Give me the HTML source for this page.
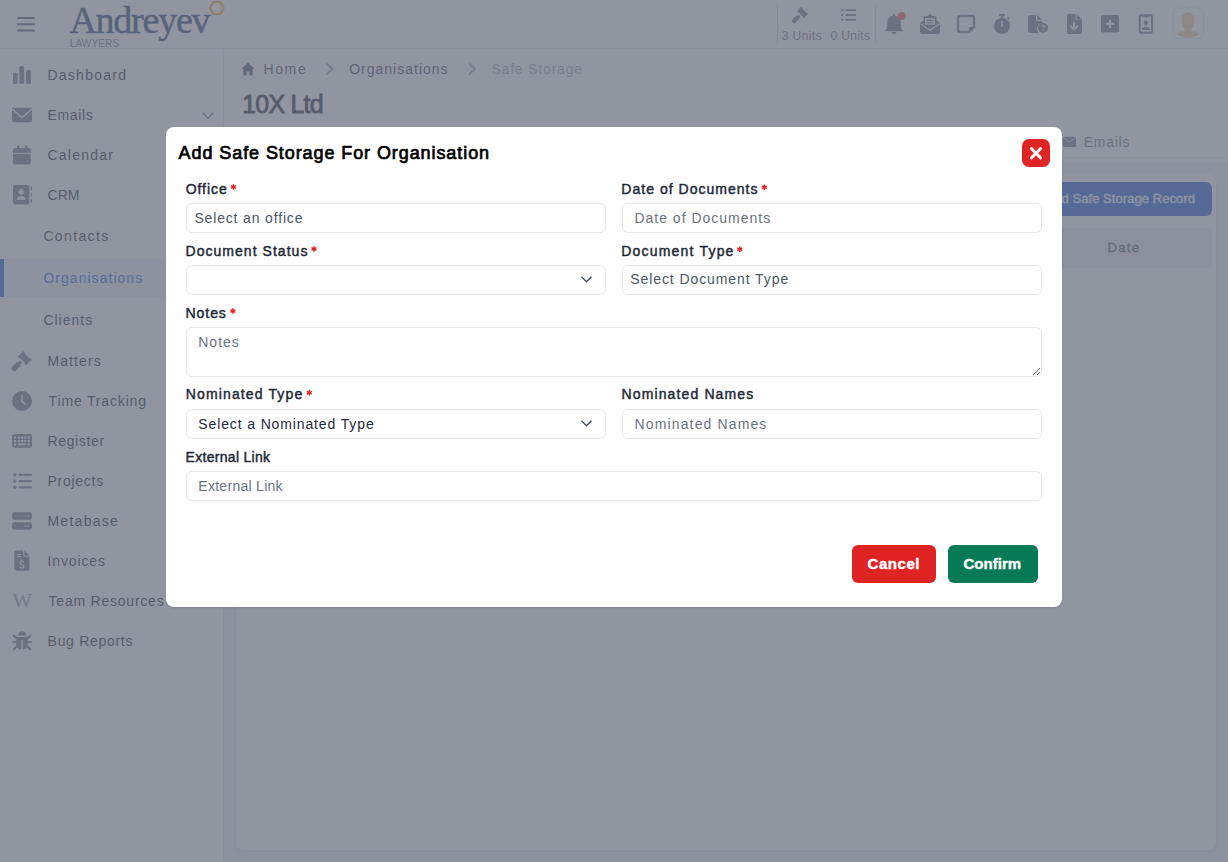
<!DOCTYPE html>
<html><head><meta charset="utf-8">
<style>
html,body{margin:0;padding:0;width:1228px;height:862px;overflow:hidden;background:#fff;font-family:"Liberation Sans",sans-serif}
.abs{position:absolute}
.tx{position:absolute;white-space:pre}
svg{position:absolute;overflow:visible}
#overlay{position:absolute;left:0;top:0;width:1228px;height:862px;background:rgba(107,114,128,0.75)}
.inp{position:absolute;box-sizing:border-box;border:1px solid #e5e7eb;border-radius:6px;background:#fff}
</style></head>
<body>
<!-- ===== BACKGROUND PAGE ===== -->
<div class="abs" style="left:0;top:0;width:1228px;height:48px;background:#fff;border-bottom:1px solid #e5e7eb"></div>
<div class="abs" style="left:0;top:49px;width:223px;height:813px;background:#fff;border-right:1px solid #e5e7eb"></div>
<div class="abs" style="left:224px;top:49px;width:1004px;height:113px;background:#fff"></div>
<div class="abs" style="left:224px;top:162px;width:1004px;height:700px;background:#f3f4f6"></div>
<!-- tab border -->
<div class="abs" style="left:236px;top:157px;width:988px;height:1px;background:#e5e7eb"></div>
<!-- card -->
<div class="abs" style="left:236px;top:174px;width:980px;height:676px;background:#fff;border-radius:7px;box-shadow:0 4px 6px -1px rgba(0,0,0,0.1),0 2px 4px -2px rgba(0,0,0,0.1)"></div>
<div class="abs" style="left:1000px;top:182px;width:212px;height:34px;background:#1a56db;border-radius:6px"></div>
<div class="abs" style="left:240px;top:228px;width:972px;height:40px;background:#e9ebee"></div>
<!-- active sidebar item -->
<div class="abs" style="left:0;top:259px;width:223px;height:38px;background:#eef2ff"></div>
<div class="abs" style="left:0;top:259px;width:4px;height:38px;background:#1a56db"></div>

<!-- hamburger -->
<svg style="left:0;top:0" width="60" height="48"><g fill="#4b5563"><rect x="17" y="17" width="18" height="2" rx="1"/><rect x="17" y="23.3" width="18" height="2" rx="1"/><rect x="17" y="29.5" width="18" height="2" rx="1"/></g></svg>
<!-- hexagon -->
<svg style="left:0;top:0" width="240" height="48"><polygon points="209.8,8 213.3,2 220.3,2 223.8,8 220.3,14 213.3,14" fill="none" stroke="#f5a020" stroke-width="2"/></svg>
<!-- header dividers -->
<div class="abs" style="left:777px;top:4px;width:1px;height:40px;background:#d1d5db"></div>
<div class="abs" style="left:875px;top:4px;width:1px;height:40px;background:#d1d5db"></div>

<!-- header icons -->
<svg style="left:0;top:0" width="1228" height="48">
 <g fill="#6b7280">
  <!-- gavel 792-808 x 7-23 -->
  <g transform="translate(792,6.5) scale(1.0312)"><g transform="rotate(45 10.2 5.9)" fill="#6b7280">
 <rect x="5.5" y="2.65" width="1.6" height="6.5" rx="0.6"/>
 <rect x="13.3" y="2.65" width="1.6" height="6.5" rx="0.6"/>
 <rect x="6.5" y="3.4" width="7.4" height="5" />
 <rect x="9.1" y="9.7" width="2.2" height="2.2" rx="0.5"/>
 <rect x="8.1" y="11.4" width="4.2" height="7.8" rx="1.3"/>
</g></g>
  <!-- list 841-856 x 9-21 -->
  <circle cx="842.2" cy="10.2" r="1.2"/><circle cx="842.2" cy="15" r="1.2"/><circle cx="842.2" cy="19.8" r="1.2"/>
  <rect x="845.5" y="9.3" width="10.5" height="1.8"/><rect x="845.5" y="14.1" width="10.5" height="1.8"/><rect x="845.5" y="18.9" width="10.5" height="1.8"/>
  <!-- bell 885-903 x 14-34 -->
  <path d="M894,14 c0.8,0 1.2,0.5 1.2,1.2 v0.6 c3.3,0.6 5.5,3.4 5.5,6.7 v3.5 c0,1.8 0.8,3.3 2.3,4.7 v0.6 h-18 v-0.6 c1.5,-1.4 2.3,-2.9 2.3,-4.7 v-3.5 c0,-3.3 2.2,-6.1 5.5,-6.7 v-0.6 c0,-0.7 0.4,-1.2 1.2,-1.2z"/>
  <path d="M891.5,32 h5 c0,1.2 -1.1,2 -2.5,2 s-2.5,-0.8 -2.5,-2z"/>
  <circle cx="901.9" cy="15.9" r="4" fill="#f05252"/>
  <!-- envelope open text 920-940 x 14-34 -->
  <path d="M930,14 l3,2.2 h3.5 v4.2 l3.5,2.6 v9 c0,1.1 -0.9,2 -2,2 h-16 c-1.1,0 -2,-0.9 -2,-2 v-9 l3.5,-2.6 v-4.2 h3.5z"/>
  <rect x="925" y="18.2" width="10" height="6.5" fill="#fff"/>
  <rect x="926.5" y="19.7" width="7" height="1.3"/><rect x="926.5" y="22" width="7" height="1.3"/>
  <path d="M920.5,23.8 l9.5,6.5 l9.5,-6.5" fill="none" stroke="#fff" stroke-width="1.2"/>
  <!-- sticky note outline 957-975 x 15-33 -->
  <path d="M959.5,16 h13 c0.8,0 1.5,0.7 1.5,1.5 v9.5 l-5,5 h-9.5 c-0.8,0 -1.5,-0.7 -1.5,-1.5 v-13 c0,-0.8 0.7,-1.5 1.5,-1.5z" fill="none" stroke="#6b7280" stroke-width="2.4"/>
  <path d="M974,27 h-4 c-0.6,0 -1,0.4 -1,1 v4z"/>
  <!-- stopwatch 994-1010 x 14-34 -->
  <rect x="999" y="14" width="6" height="2" rx="0.8"/>
  <rect x="1001" y="15.5" width="2" height="3"/>
  <circle cx="1002" cy="26" r="8"/>
  <rect x="1007.2" y="17.3" width="2.2" height="2.2" transform="rotate(45 1008.3 18.4)"/>
  <rect x="1001.1" y="21" width="1.8" height="6" rx="0.9" fill="#fff"/>
  <!-- file question 1028-1048 x 15-33 -->
  <path d="M1030,15 h6 v4.5 c0,0.8 0.7,1.5 1.5,1.5 h4.5 v2 a5.8,5.8 0 0 0 -3.2,10 h-8.8 c-1.1,0 -2,-0.9 -2,-2 v-14 c0,-1.1 0.9,-2 2,-2z"/>
  <path d="M1037.3,15 l4.7,4.7 h-4.7z"/>
  <circle cx="1043" cy="27.7" r="5"/>
  <path d="M1041.6,26.5 c0,-0.9 0.6,-1.5 1.4,-1.5 c0.8,0 1.4,0.5 1.4,1.3 c0,1.1 -1.4,1.1 -1.4,2.2" fill="none" stroke="#fff" stroke-width="1.1"/>
  <circle cx="1043" cy="30.2" r="0.7" fill="#fff"/>
  <!-- file arrow down 1067-1082 x 14-34 -->
  <path d="M1069,14 h6.5 v4.5 c0,0.8 0.7,1.5 1.5,1.5 h5 v12 c0,1.1 -0.9,2 -2,2 h-11 c-1.1,0 -2,-0.9 -2,-2 v-16 c0,-1.1 0.9,-2 2,-2z"/>
  <path d="M1076.5,14 l5.5,5.5 h-5.5z"/>
  <path d="M1074,22.6 v7 M1070.6,26.2 l3.4,3.6 l3.4,-3.6" fill="none" stroke="#fff" stroke-width="2" stroke-linecap="round" stroke-linejoin="round"/>
  <!-- square plus 1101-1119 x 15-32.5 -->
  <rect x="1101" y="15" width="18" height="17.5" rx="2.2"/>
  <path d="M1110,19.9 v8.1 M1105.9,23.95 h8.2" stroke="#fff" stroke-width="2.2"/>
  <!-- id badge outline 1139-1153 x 14-34 -->
  <rect x="1139.7" y="15.2" width="12.3" height="17.5" rx="1.8" fill="none" stroke="#6b7280" stroke-width="2"/>
  <rect x="1143.4" y="16" width="5.2" height="1.4"/>
  <circle cx="1145.9" cy="22.8" r="2.2"/>
  <path d="M1142,30 c0,-2.2 1.6,-3.2 3.9,-3.2 s3.9,1 3.9,3.2z"/>
 </g>
 <!-- avatar -->
 <rect x="1173" y="8" width="30.5" height="30.5" rx="5.5" fill="#fff" stroke="#e5e7eb" stroke-width="1"/>
 <g fill="#f8c8a0">
  <path d="M1188,12.7 c3.6,0 6.2,2.2 6.2,6.5 c0,4.2 -0.6,7.4 -2,9.2 c-1.1,1.3 -2.5,1.7 -4.2,1.7 s-3.1,-0.4 -4.2,-1.7 c-1.4,-1.8 -2,-5 -2,-9.2 c0,-4.3 2.6,-6.5 6.2,-6.5z"/>
  <rect x="1184.8" y="27" width="6.6" height="4.5"/>
  <path d="M1176.8,34 C1180,31.2 1184,30.6 1188,30.6 C1192,30.6 1196,31.2 1199.2,34 C1196,37 1192,37.8 1188,37.8 C1184,37.8 1180,37 1176.8,34z"/>
 </g>
</svg>

<!-- sidebar icons -->
<svg style="left:0;top:0" width="223" height="700">
 <g fill="#6b7280">
  <!-- dashboard bars -->
  <rect x="13" y="72.7" width="4.6" height="11.3" rx="1.5"/>
  <rect x="19.3" y="66" width="4.8" height="18" rx="1.5"/>
  <rect x="26" y="70" width="4.8" height="14" rx="1.5"/>
  <!-- envelope -->
  <rect x="12" y="107.8" width="20" height="14.5" rx="2"/>
  <path d="M12.3,109.3 L22,117.6 L31.7,109.3" fill="none" stroke="#fff" stroke-width="1.3"/>
  <!-- calendar -->
  <rect x="13" y="148" width="17.8" height="16.6" rx="2"/>
  <rect x="17" y="145.5" width="2.3" height="4" rx="0.8"/>
  <rect x="25" y="145.5" width="2.3" height="4" rx="0.8"/>
  <rect x="13" y="152.8" width="17.8" height="0.9" fill="#fff"/>
  <!-- CRM address book -->
  <rect x="13" y="185" width="16.3" height="19.6" rx="2.5"/>
  <circle cx="21.2" cy="192" r="2.7" fill="#fff"/>
  <path d="M16.8,199.8 c0,-2.6 2,-3.7 4.4,-3.7 s4.4,1.1 4.4,3.7z" fill="#fff"/>
  <rect x="30.6" y="187" width="1.4" height="3.5"/><rect x="30.6" y="193" width="1.4" height="3.5"/><rect x="30.6" y="199" width="1.4" height="3.5"/>
  <!-- gavel 12-32 x 351-371 -->
  <g transform="translate(11.5,350.5) scale(1.2875)"><g transform="rotate(45 10.2 5.9)" fill="#6b7280">
 <rect x="5.5" y="2.65" width="1.6" height="6.5" rx="0.6"/>
 <rect x="13.3" y="2.65" width="1.6" height="6.5" rx="0.6"/>
 <rect x="6.5" y="3.4" width="7.4" height="5" />
 <rect x="9.1" y="9.7" width="2.2" height="2.2" rx="0.5"/>
 <rect x="8.1" y="11.4" width="4.2" height="7.8" rx="1.3"/>
</g></g>
  <!-- clock -->
  <circle cx="22" cy="401" r="10"/>
  <path d="M22,395.5 v5.7 l3.3,3.3" fill="none" stroke="#fff" stroke-width="1.6" stroke-linecap="round"/>
  <!-- keyboard -->
  <rect x="12" y="434" width="20" height="13.8" rx="2.2"/>
  <g fill="#fff"><rect x="14" y="436.6" width="2.1" height="2.1"/><rect x="17.7" y="436.6" width="2.1" height="2.1"/><rect x="21" y="436.6" width="2.1" height="2.1"/><rect x="24.2" y="436.6" width="2.1" height="2.1"/><rect x="27.7" y="436.6" width="2.1" height="2.1"/><rect x="14" y="440.0" width="2.1" height="2.1"/><rect x="17.7" y="440.0" width="2.1" height="2.1"/><rect x="21" y="440.0" width="2.1" height="2.1"/><rect x="24.2" y="440.0" width="2.1" height="2.1"/><rect x="27.7" y="440.0" width="2.1" height="2.1"/><rect x="14" y="443.3" width="2.1" height="2.1"/><rect x="17.9" y="443.3" width="8.1" height="2.1"/><rect x="27.7" y="443.3" width="2.1" height="2.1"/></g>
  <!-- list -->
  <circle cx="14.8" cy="474.8" r="1.8"/><circle cx="14.8" cy="481" r="1.8"/><circle cx="14.8" cy="487.3" r="1.8"/>
  <rect x="18.7" y="473.8" width="13.3" height="2.2" rx="1"/><rect x="18.7" y="480" width="13.3" height="2.2" rx="1"/><rect x="18.7" y="486.2" width="13.3" height="2.2" rx="1"/>
  <!-- server -->
  <rect x="12" y="512.2" width="20" height="7.6" rx="2.4"/>
  <rect x="12" y="522.2" width="20" height="7.6" rx="2.4"/>
  <g fill="#fff"><rect x="24.7" y="515.3" width="1.4" height="1.5"/><rect x="27.5" y="515.3" width="1.4" height="1.5"/><rect x="24.7" y="525.3" width="1.4" height="1.5"/><rect x="27.5" y="525.3" width="1.4" height="1.5"/></g>
  <!-- invoice -->
  <path d="M16.3,550.6 h7 v4.5 c0,0.8 0.7,1.5 1.5,1.5 h4.6 v12.1 c0,1.1 -0.9,2 -2,2 h-11.1 c-1.1,0 -2,-0.9 -2,-2 v-16.1 c0,-1.1 0.9,-2 2,-2z"/>
  <path d="M24.3,550.6 l5.1,5.1 h-5.1z"/>
  <g fill="#fff"><rect x="17" y="554" width="4" height="0.9"/><rect x="17" y="556.2" width="4" height="0.9"/></g>
  <path d="M24,562.4 c-0.5,-0.7 -1.3,-1 -2.1,-1 c-1.2,0 -2,0.6 -2,1.5 c0,2 4.2,1.2 4.2,3.4 c0,1 -0.9,1.6 -2.1,1.6 c-0.9,0 -1.7,-0.4 -2.2,-1.1 M21.9,560 v1.4 M21.9,567.5 v1.3" fill="none" stroke="#fff" stroke-width="1.1"/>
  <!-- W -->
  <text x="22.2" y="607.4" font-family="Liberation Serif" font-size="19.5" fill="#8b919c" text-anchor="middle" textLength="19.6" lengthAdjust="spacingAndGlyphs">W</text>
  <!-- bug -->
  <path d="M18.1,635.6 a3.9,4.3 0 0 1 7.8,0 z"/>
  <path d="M16.2,637 h11.6 v6.5 c0,3.5 -2.6,6.2 -5.8,6.2 s-5.8,-2.7 -5.8,-6.2z"/>
  <g stroke="#6b7280" stroke-width="2.2" stroke-linecap="round">
   <line x1="13.8" y1="635.8" x2="17" y2="638.6"/><line x1="30.2" y1="635.8" x2="27" y2="638.6"/>
   <line x1="13.8" y1="649.2" x2="16.8" y2="646.5"/><line x1="30.2" y1="649.2" x2="27.2" y2="646.5"/>
  </g>
  <rect x="12.2" y="641.2" width="4.5" height="2"/><rect x="27.3" y="641.2" width="4.5" height="2"/>
  <rect x="21.25" y="640" width="1.5" height="10" fill="#fff"/>
 </g>
 <!-- emails chevron -->
 <path d="M202.5,112.8 L208,118.3 L213.5,112.8" fill="none" stroke="#6b7280" stroke-width="1.5"/>
</svg>

<!-- main icons -->
<svg style="left:0;top:0" width="1228" height="300">
 <g fill="#6b7280">
  <!-- house -->
  <path fill="#4b5563" d="M248,62.7 L254.5,68.8 h-1.8 v6.7 h-3.3 v-4 h-2.8 v4 h-3.3 v-6.7 h-1.8z"/>
  <!-- envelope tab -->
  <rect x="1063" y="136.7" width="13" height="10.3" rx="1.3"/>
 </g>
 <path d="M1063.5,137.6 L1069.5,142 L1075.5,137.6" fill="none" stroke="#fff" stroke-width="1"/>
 <g fill="none" stroke="#9ca3af" stroke-width="2">
  <path d="M326.5,63.5 L332.5,69 L326.5,74.5"/>
  <path d="M469,63.5 L475,69 L469,74.5"/>
 </g>
</svg>

<div class='tx' style='left:69.4px;top:1.2px;font-size:38px;line-height:38px;font-weight:400;color:#1e3a6e;letter-spacing:-1.243px;font-family:"Liberation Serif";-webkit-text-stroke:0.5px #1e3a6e'>Andreyev</div>
<div class='tx' style='left:69.7px;top:38.5px;font-size:10px;line-height:10px;font-weight:400;color:#5a6a8a;letter-spacing:0.150px;font-family:"Liberation Sans";'>LAWYERS</div>
<div class='tx' style='left:781.7px;top:29.6px;font-size:12px;line-height:12px;font-weight:400;color:#6b7280;letter-spacing:0.433px;font-family:"Liberation Sans";'>3 Units</div>
<div class='tx' style='left:830.6px;top:29.6px;font-size:12px;line-height:12px;font-weight:400;color:#6b7280;letter-spacing:0.350px;font-family:"Liberation Sans";'>0 Units</div>
<div class='tx' style='left:47.4px;top:68.0px;font-size:14px;line-height:14px;font-weight:400;color:#111827;letter-spacing:1.275px;font-family:"Liberation Sans";'>Dashboard</div>
<div class='tx' style='left:47.4px;top:108.0px;font-size:14px;line-height:14px;font-weight:400;color:#111827;letter-spacing:0.660px;font-family:"Liberation Sans";'>Emails</div>
<div class='tx' style='left:47.4px;top:148.0px;font-size:14px;line-height:14px;font-weight:400;color:#111827;letter-spacing:1.243px;font-family:"Liberation Sans";'>Calendar</div>
<div class='tx' style='left:47.6px;top:188.0px;font-size:14px;line-height:14px;font-weight:400;color:#111827;letter-spacing:0.000px;font-family:"Liberation Sans";'>CRM</div>
<div class='tx' style='left:43.4px;top:229.0px;font-size:14px;line-height:14px;font-weight:400;color:#111827;letter-spacing:1.357px;font-family:"Liberation Sans";'>Contacts</div>
<div class='tx' style='left:43.4px;top:271.0px;font-size:14px;line-height:14px;font-weight:400;color:#1a56db;letter-spacing:1.033px;font-family:"Liberation Sans";'>Organisations</div>
<div class='tx' style='left:43.4px;top:313.0px;font-size:14px;line-height:14px;font-weight:400;color:#111827;letter-spacing:1.000px;font-family:"Liberation Sans";'>Clients</div>
<div class='tx' style='left:47.4px;top:354.0px;font-size:14px;line-height:14px;font-weight:400;color:#111827;letter-spacing:1.117px;font-family:"Liberation Sans";'>Matters</div>
<div class='tx' style='left:48.6px;top:394.0px;font-size:14px;line-height:14px;font-weight:400;color:#111827;letter-spacing:0.833px;font-family:"Liberation Sans";'>Time Tracking</div>
<div class='tx' style='left:47.4px;top:434.0px;font-size:14px;line-height:14px;font-weight:400;color:#111827;letter-spacing:0.671px;font-family:"Liberation Sans";'>Register</div>
<div class='tx' style='left:47.4px;top:474.0px;font-size:14px;line-height:14px;font-weight:400;color:#111827;letter-spacing:0.757px;font-family:"Liberation Sans";'>Projects</div>
<div class='tx' style='left:47.4px;top:514.0px;font-size:14px;line-height:14px;font-weight:400;color:#111827;letter-spacing:1.286px;font-family:"Liberation Sans";'>Metabase</div>
<div class='tx' style='left:47.6px;top:554.0px;font-size:14px;line-height:14px;font-weight:400;color:#111827;letter-spacing:0.857px;font-family:"Liberation Sans";'>Invoices</div>
<div class='tx' style='left:48.6px;top:594.0px;font-size:14px;line-height:14px;font-weight:400;color:#111827;letter-spacing:0.769px;font-family:"Liberation Sans";'>Team Resources</div>
<div class='tx' style='left:47.6px;top:634.0px;font-size:14px;line-height:14px;font-weight:400;color:#111827;letter-spacing:0.700px;font-family:"Liberation Sans";'>Bug Reports</div>
<div class='tx' style='left:263.4px;top:62.3px;font-size:14px;line-height:14px;font-weight:400;color:#374151;letter-spacing:1.667px;font-family:"Liberation Sans";'>Home</div>
<div class='tx' style='left:349.2px;top:62.3px;font-size:14px;line-height:14px;font-weight:400;color:#374151;letter-spacing:1.000px;font-family:"Liberation Sans";'>Organisations</div>
<div class='tx' style='left:491.4px;top:62.3px;font-size:14px;line-height:14px;font-weight:400;color:#9ca3af;letter-spacing:0.818px;font-family:"Liberation Sans";'>Safe Storage</div>
<div class='tx' style='left:242.2px;top:92.4px;font-size:25px;line-height:25px;font-weight:400;color:#111827;letter-spacing:-0.783px;font-family:"Liberation Sans";-webkit-text-stroke:0.8px #111827'>10X Ltd</div>
<div class='tx' style='left:1083.7px;top:135.3px;font-size:14px;line-height:14px;font-weight:400;color:#6b7280;letter-spacing:0.740px;font-family:"Liberation Sans";'>Emails</div>
<div class='tx' style='left:1061.5px;top:191.7px;font-size:13px;line-height:13px;font-weight:400;color:#ffffff;letter-spacing:0.060px;font-family:"Liberation Sans";-webkit-text-stroke:0.3px #fff'>d Safe Storage Record</div>
<div class='tx' style='left:1107.4px;top:241.0px;font-size:13px;line-height:13px;font-weight:400;color:#4b5563;letter-spacing:1.367px;font-family:"Liberation Sans";-webkit-text-stroke:0.3px #4b5563'>Date</div>

<div id="overlay"></div>

<!-- ===== MODAL ===== -->
<div class="abs" style="left:166px;top:127px;width:896px;height:480px;background:#fff;border-radius:8px;box-shadow:0 1px 2px rgba(0,0,0,0.12)"></div>
<div class="abs" style="left:1022px;top:139px;width:28px;height:28px;background:#e02424;border-radius:7px"></div>
<svg style="left:0;top:0" width="1228" height="862">
 <path d="M1031.35,148.55 L1040.65,157.85 M1040.65,148.55 L1031.35,157.85" stroke="#fff" stroke-width="3" stroke-linecap="round"/>
</svg>

<div class="inp" style="left:186px;top:203px;width:420px;height:30px"></div>
<div class="inp" style="left:622px;top:203px;width:420px;height:30px"></div>
<div class="inp" style="left:186px;top:265px;width:420px;height:30px"></div>
<div class="inp" style="left:622px;top:265px;width:420px;height:30px"></div>
<textarea style="position:absolute;left:186px;top:327px;width:856px;height:50px;box-sizing:border-box;border:1px solid #e5e7eb;border-radius:6px;background:#fff;margin:0;padding:0;outline:none;font-family:'Liberation Sans',sans-serif"></textarea>
<div class="inp" style="left:186px;top:409px;width:420px;height:30px"></div>
<div class="inp" style="left:622px;top:409px;width:420px;height:30px"></div>
<div class="inp" style="left:186px;top:471px;width:856px;height:30px"></div>
<svg style="left:0;top:0" width="1228" height="862">
 <g fill="none" stroke="#4b5563" stroke-width="1.5">
  <path d="M581.5,276.7 L586.5,281.7 L591.5,276.7"/>
  <path d="M581.5,420.7 L586.5,425.7 L591.5,420.7"/>
 </g>
</svg>

<div class="abs" style="left:852px;top:545px;width:84px;height:38px;background:#e02424;border-radius:6px"></div>
<div class="abs" style="left:948px;top:545px;width:90px;height:38px;background:#057a55;border-radius:6px"></div>

<div class='tx' style='left:178.6px;top:143.6px;font-size:18px;line-height:18px;font-weight:400;color:#000000;letter-spacing:0.916px;font-family:"Liberation Sans";-webkit-text-stroke:0.7px #000'>Add Safe Storage For Organisation</div>
<div class='tx' style='left:185.7px;top:182.3px;font-size:14px;line-height:14px;font-weight:400;color:#1f2937;letter-spacing:0.940px;font-family:"Liberation Sans";-webkit-text-stroke:0.45px #1f2937'>Office</div>
<div class='tx' style='left:621.3px;top:182.3px;font-size:14px;line-height:14px;font-weight:400;color:#1f2937;letter-spacing:1.025px;font-family:"Liberation Sans";-webkit-text-stroke:0.45px #1f2937'>Date of Documents</div>
<div class='tx' style='left:185.5px;top:244.4px;font-size:14px;line-height:14px;font-weight:400;color:#1f2937;letter-spacing:1.036px;font-family:"Liberation Sans";-webkit-text-stroke:0.45px #1f2937'>Document Status</div>
<div class='tx' style='left:621.3px;top:244.4px;font-size:14px;line-height:14px;font-weight:400;color:#1f2937;letter-spacing:1.192px;font-family:"Liberation Sans";-webkit-text-stroke:0.45px #1f2937'>Document Type</div>
<div class='tx' style='left:185.5px;top:306.0px;font-size:14px;line-height:14px;font-weight:400;color:#1f2937;letter-spacing:0.950px;font-family:"Liberation Sans";-webkit-text-stroke:0.45px #1f2937'>Notes</div>
<div class='tx' style='left:185.8px;top:387.2px;font-size:14px;line-height:14px;font-weight:400;color:#1f2937;letter-spacing:1.131px;font-family:"Liberation Sans";-webkit-text-stroke:0.45px #1f2937'>Nominated Type</div>
<div class='tx' style='left:621.5px;top:387.2px;font-size:14px;line-height:14px;font-weight:400;color:#1f2937;letter-spacing:1.129px;font-family:"Liberation Sans";-webkit-text-stroke:0.45px #1f2937'>Nominated Names</div>
<div class='tx' style='left:185.6px;top:450.1px;font-size:14px;line-height:14px;font-weight:400;color:#1f2937;letter-spacing:0.292px;font-family:"Liberation Sans";-webkit-text-stroke:0.45px #1f2937'>External Link</div>
<div class='tx' style='left:194.4px;top:211.2px;font-size:14px;line-height:14px;font-weight:400;color:#4b5563;letter-spacing:0.840px;font-family:"Liberation Sans";'>Select an office</div>
<div class='tx' style='left:634.4px;top:210.6px;font-size:14px;line-height:14px;font-weight:400;color:#6b7280;letter-spacing:1.000px;font-family:"Liberation Sans";'>Date of Documents</div>
<div class='tx' style='left:630.3px;top:272.3px;font-size:14px;line-height:14px;font-weight:400;color:#4b5563;letter-spacing:0.911px;font-family:"Liberation Sans";'>Select Document Type</div>
<div class='tx' style='left:198.2px;top:334.9px;font-size:14px;line-height:14px;font-weight:400;color:#6b7280;letter-spacing:1.025px;font-family:"Liberation Sans";'>Notes</div>
<div class='tx' style='left:198.3px;top:416.5px;font-size:14px;line-height:14px;font-weight:400;color:#1f2937;letter-spacing:0.873px;font-family:"Liberation Sans";'>Select a Nominated Type</div>
<div class='tx' style='left:634.6px;top:416.5px;font-size:14px;line-height:14px;font-weight:400;color:#6b7280;letter-spacing:1.129px;font-family:"Liberation Sans";'>Nominated Names</div>
<div class='tx' style='left:198.3px;top:478.7px;font-size:14px;line-height:14px;font-weight:400;color:#6b7280;letter-spacing:0.283px;font-family:"Liberation Sans";'>External Link</div>
<div class='tx' style='left:867.5px;top:556.0px;font-size:15px;line-height:15px;font-weight:700;color:#ffffff;letter-spacing:0.560px;font-family:"Liberation Sans";-webkit-text-stroke:0.4px #fff'>Cancel</div>
<div class='tx' style='left:963.5px;top:556.0px;font-size:15px;line-height:15px;font-weight:700;color:#ffffff;letter-spacing:0.033px;font-family:"Liberation Sans";-webkit-text-stroke:0.4px #fff'>Confirm</div>
<svg style='left:0;top:0' width='1228' height='862'><g stroke='#e02424' stroke-width='1.5' stroke-linecap='butt'><line x1='233.5' y1='184.2' x2='233.5' y2='189.8'/><line x1='231.0' y1='185.6' x2='236.0' y2='188.4'/><line x1='231.0' y1='188.4' x2='236.0' y2='185.6'/><line x1='764.3' y1='184.49999999999997' x2='764.3' y2='190.1'/><line x1='761.8' y1='185.89999999999998' x2='766.8' y2='188.7'/><line x1='761.8' y1='188.7' x2='766.8' y2='185.89999999999998'/><line x1='314' y1='246.2' x2='314' y2='251.8'/><line x1='311.5' y1='247.6' x2='316.5' y2='250.4'/><line x1='311.5' y1='250.4' x2='316.5' y2='247.6'/><line x1='739.8' y1='246.49999999999997' x2='739.8' y2='252.1'/><line x1='737.3' y1='247.89999999999998' x2='742.3' y2='250.7'/><line x1='737.3' y1='250.7' x2='742.3' y2='247.89999999999998'/><line x1='232.9' y1='308.2' x2='232.9' y2='313.8'/><line x1='230.4' y1='309.6' x2='235.4' y2='312.4'/><line x1='230.4' y1='312.4' x2='235.4' y2='309.6'/><line x1='309.3' y1='389.9' x2='309.3' y2='395.5'/><line x1='306.8' y1='391.3' x2='311.8' y2='394.09999999999997'/><line x1='306.8' y1='394.09999999999997' x2='311.8' y2='391.3'/></g></svg>
</body></html>
